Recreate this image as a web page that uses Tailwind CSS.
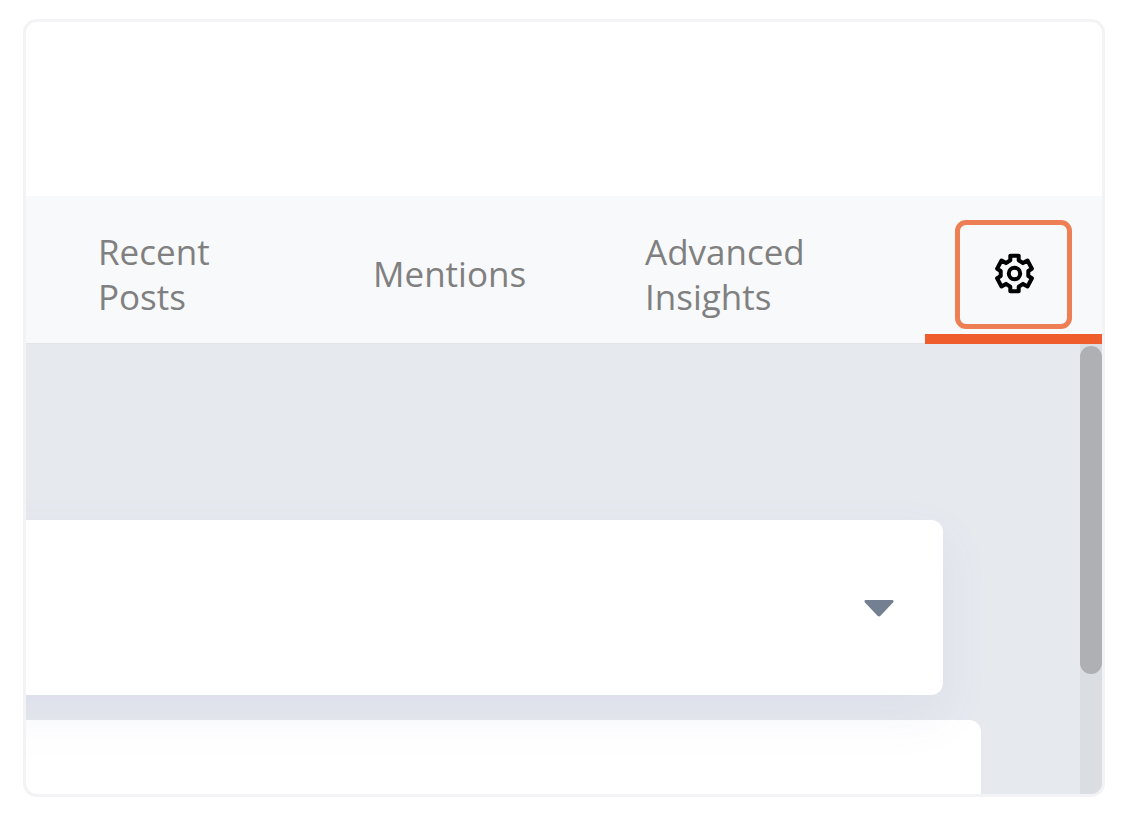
<!DOCTYPE html>
<html lang="en">

<head>
    <meta charset="UTF-8">
    <meta name="viewport" content="width=device-width, initial-scale=1.0">
    <title>Settings</title>
    <script src="https://cdn.jsdelivr.net/npm/@tailwindcss/browser@4"></script>
</head>

<body class="bg-white min-h-screen flex flex-col pt-[19px] pb-[19px] pl-[23px] pr-[17px] font-['Open_Sans','Noto_Sans',sans-serif]">
    <div class="grow flex flex-col border-3 border-[#f3f3f5] rounded-[14px] overflow-hidden">
        <!-- Header -->
        <header class="h-[174px] bg-white"></header>

        <!-- Tabs -->
        <nav class="h-[148px] pl-[72px] grid grid-cols-[275fr_272fr_280fr_177fr] bg-[#f8f9fb] border-b border-[#e2e4e8] text-[35px] leading-[45px] text-[#808080]">
            <a href="#recent" class="flex items-center pt-2"><span class="w-min">Recent Posts</span></a>
            <a href="#mentions" class="flex items-center pt-2">Mentions</a>
            <a href="#insights" class="flex items-center pt-2"><span class="w-min">Advanced Insights</span></a>
            <div class="-mb-px flex flex-col items-center border-b-10 border-[#ee5d2b] pt-6">
                <button type="button" aria-label="Settings"
                    class="w-[117px] h-[109px] flex items-center justify-center border-5 border-[#ee7f55] rounded-[11px]">
                    <svg class="w-[43px] h-[43px]" viewBox="-22.5 -20.5 43 43" fill="none" stroke="#000" stroke-width="4" stroke-linejoin="round">
                        <path d="M-4.200-17.700H4.200V-13.200L8.500-10.400L13-13L17.400-4.800L13.800-2.500V2.500L17.400 4.800L13 13L8.500 10.400L4.200 13.200V17.700H-4.200V13.200L-8.500 10.400L-13 13L-17.400 4.800L-13.800 2.500V-2.500L-17.400-4.800L-13-13L-8.500-10.400L-4.200-13.200Z" />
                        <circle r="5.7" />
                    </svg>
                </button>
            </div>
        </nav>

        <!-- Content -->
        <main class="grow flex bg-[#e6e9ee]">
            <div class="grow flex flex-col pt-[176px] pr-[99px]">
                <!-- The select runs on past the left edge of the panel -->
                <div class="relative z-10 -ml-20 mr-[38px]">
                    <select aria-label="Account"
                        class="block w-full h-[175px] appearance-none bg-white rounded-[12px] shadow-[0_20px_50px_rgba(100,120,190,0.08)]"></select>
                    <svg class="absolute right-[49px] top-20 w-[30px] h-[17px] pointer-events-none" viewBox="0 0 30 17" fill="#728091">
                        <path d="M2 0H28Q30.500 0 29 2.500L16.500 15.800Q15 17 13.500 15.800L1 2.500Q-.5 0 2 0Z" />
                    </svg>
                </div>
                <section class="grow mt-[25px] bg-white rounded-tr-[12px]"></section>
            </div>
            <!-- Scrollbar -->
            <div class="w-[22px] pt-[2px] bg-[#dadde2]">
                <div class="h-[328px] bg-[#afb0b4] rounded-full"></div>
            </div>
        </main>
    </div>
</body>

</html>
